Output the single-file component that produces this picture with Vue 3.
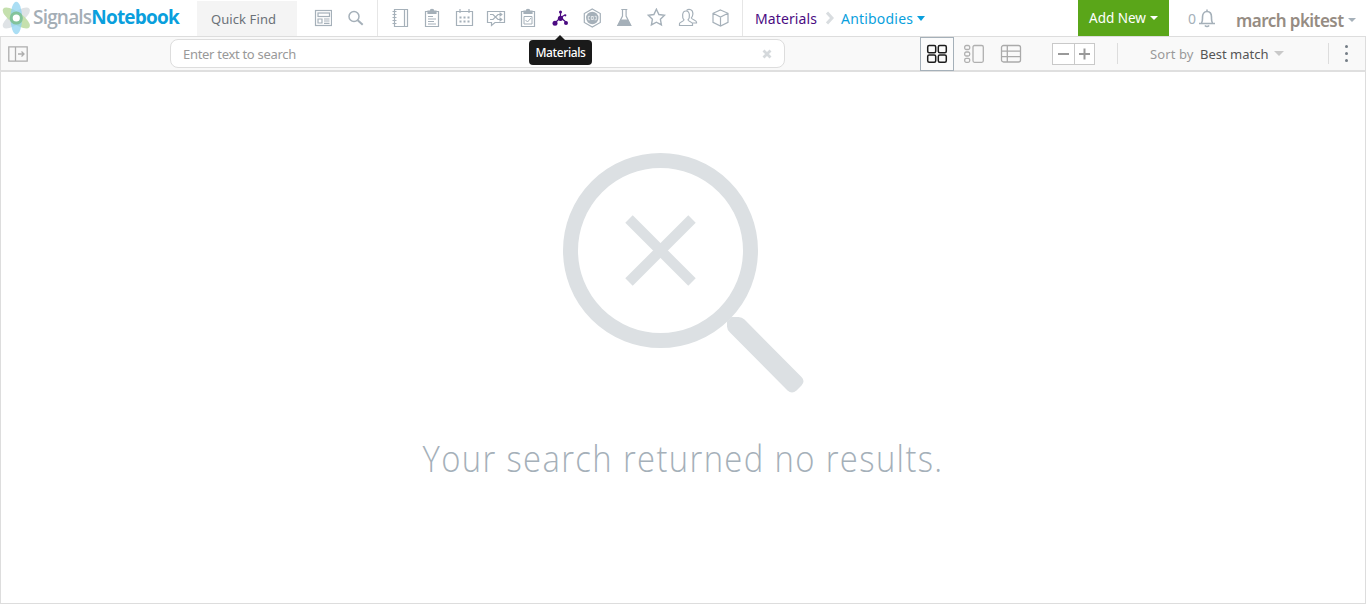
<script setup>
const navIcons = [
  'notebook', 'clipboard', 'calendar', 'shuffle', 'task', 'materials',
  'hexagon', 'flask', 'star', 'people', 'cube',
]
</script>

<template>
  <div class="app">
    <header class="header">
      <div class="brand">
        <svg class="logo" width="32" height="36" viewBox="0 0 32 36">
          <ellipse cx="16.3" cy="18" rx="16" ry="6" transform="rotate(-35 16.3 18)" fill="#dfe3e6" />
          <ellipse cx="16.3" cy="18" rx="16" ry="6" transform="rotate(35 16.3 18)" fill="#c5e0ae" />
          <ellipse cx="16.3" cy="18" rx="5.8" ry="16.2" fill="#8fd3f0" fill-opacity=".75" />
          <circle cx="16.3" cy="18" r="6.6" fill="#82c39b" />
          <circle cx="16.3" cy="18" r="3.6" fill="#fff" />
        </svg>
        <span class="word"><span class="signals">Signals</span><span class="book">Notebook</span></span>
      </div>
      <button class="quick"><span>Quick Find</span></button>
      <div class="tools">
        <svg width="18" height="18" viewBox="0 0 18 18" class="ic">
          <rect x="1.500" y="1.500" width="16" height="15" />
          <rect x="4" y="4" width="11.500" height="3.500" />
          <path d="M4 10h4v4H4zM10 10h5.500M10 12h5.500M10 14.300h5.500" />
        </svg>
        <svg width="18" height="18" viewBox="0 0 18 18" class="ic">
          <circle cx="8" cy="7.500" r="5" stroke-width="1.500" /><path d="M11.700 11.200l5 4.500" stroke-width="2" />
        </svg>
      </div>
      <nav class="nav">
        <a v-for="name in navIcons" :key="name" class="item">
          <svg width="20" height="20" viewBox="0 0 20 20" class="ic">
            <g v-if="name === 'notebook'">
              <path d="M4.500 1.500h13v17h-13zM14.500 1.500v17" />
              <path d="M2.500 3.500h4M2.500 6.500h4M2.500 9.500h4M2.500 12.500h4M2.500 15.500h4" />
            </g>
            <g v-else-if="name === 'clipboard'">
              <path d="M6 3.500H3.500v15h13v-15H14" />
              <path d="M6 5.500v-2.500h2.200c.2-2.300 3.400-2.300 3.600 0H14v2.500z" fill="#a5b0b9" />
              <path d="M6 8.500h5M6 11h8M6 13.500h6M6 16h8" />
            </g>
            <g v-else-if="name === 'calendar'">
              <path d="M2.500 3.500h16v14h-16zM6 1v4M15 1v4" />
              <path d="M5.500 9.500h10M5.500 13.500h10" stroke-width="2" stroke-dasharray="2 2" />
            </g>
            <g v-else-if="name === 'shuffle'">
              <path d="M1.500 3.500h17v11H9l-3.500 3v-3h-4z" />
              <path d="M4 6.500h3l5 5h3.500M4 11.500h3l5-5h3.500M13.500 4.700l2.300 1.800-2.300 1.800M13.500 9.700l2.300 1.800-2.300 1.800" stroke-width="1.200" />
            </g>
            <g v-else-if="name === 'task'">
              <path d="M6 3.500H3.500v15h13v-15H14" />
              <path d="M6 5.500v-2.500h2.200c.2-2.300 3.400-2.300 3.600 0H14v2.500z" fill="#a5b0b9" />
              <path d="M6 8.500h8v7.500H6zM7.500 12l2 2 3.500-4" stroke-width="1" />
            </g>
            <g v-else-if="name === 'materials'" class="purple">
              <path d="M10.500 9.500L5 15M10.500 9.500V4M10.500 9.500l6 5M10.500 9.500L15 7" stroke-width="1.200" />
              <circle cx="5" cy="15.200" r="2.500" /><circle cx="10.500" cy="10.300" r="2.600" />
              <circle cx="10.500" cy="4" r="1.500" /><circle cx="16" cy="15" r="2" /><circle cx="15.300" cy="7.300" r="1.100" />
            </g>
            <g v-else-if="name === 'hexagon'">
              <path d="M10.300 1l8 4.500v9l-8 4.500-8-4.500v-9z" />
              <circle cx="10.300" cy="10" r="6.200" fill="#a5b0b9" stroke="none" />
              <path d="M8 8.300H6.300v3.500H8M9.300 8.500h2v3h-2zM12.600 8.300h1.700v3.500h-1.700" stroke="#fff" stroke-width=".7" />
            </g>
            <g v-else-if="name === 'flask'">
              <path d="M7.300 1.500h6M8.500 2v6L3.800 17.500h13L12.100 8V2" />
              <path d="M6.700 11.500h7.200l3.400 6.500h-14z" fill="#a5b0b9" stroke="none" />
            </g>
            <path v-else-if="name === 'star'" d="M10.400 1.200l2.500 5.300 5.600.8-4.100 4 1 5.600-5-2.700-5 2.700 1-5.600-4.100-4 5.600-.8z" stroke-width="1.400" />
            <g v-else-if="name === 'people'">
              <path d="M1.500 17.500v-2c0-1.500 4.200-2 4.500-3.500-2-2-2.300-9 2-9s4 7 2 9c.3 1.500 4.500 2 4.500 3.500v2z" />
              <path d="M8.500 2.500c2.500-2.200 7-1 6.300 4-.2 1.600-.8 2.600-1.500 3.500.3 1.600 5.200 2 5.200 4v1h-4" />
            </g>
            <path v-else d="M10.500 2l7.500 3.300v9L10.500 18 3 14.300v-9zM3 5.300L10.500 9 18 5.300M10.500 9v9" />
          </svg>
          <span v-if="name === 'materials'" class="tip">Materials</span>
        </a>
      </nav>
      <div class="crumbs">
        <a class="root">Materials</a>
        <svg class="sep" width="8" height="14" viewBox="0 0 8 14"><path d="M1 1.500L6 7l-5 5.500" fill="none" stroke="#d9dde0" stroke-width="3" /></svg>
        <a class="leaf">Antibodies</a><i class="caret blue"></i>
      </div>
      <button class="add"><span>Add New</span><i class="caret white"></i></button>
      <div class="bell">
        <span>0</span>
        <svg width="18" height="20" viewBox="0 0 18 20" fill="none" stroke="#a5b0b9" stroke-width="1.600">
          <path d="M1 15.500h16M3.500 15c1.200-1.500 1-3.500 1-6 0-3 1.600-5.500 4.500-5.500s4.500 2.500 4.500 5.500c0 2.500-.2 4.500 1 6M9 3.500v-2M6.800 17.500q2.200 2 4.400 0" />
        </svg>
      </div>
      <div class="user"><span>march pkitest</span><i class="caret gray"></i></div>
    </header>

    <div class="bar">
      <svg class="panel" width="20" height="16" viewBox="0 0 20 16" fill="none" stroke="#adadad" stroke-width="1.300">
        <path d="M.8.800h18.400v14.400H.8zM7.500 1v14M10 8h6M13.500 5.500L16 8l-2.500 2.500" />
      </svg>
      <div class="search">
        <span>Enter text to search</span>
        <svg width="10" height="10" viewBox="0 0 10 10"><path d="M1.500 1.500l7 7M8.500 1.500l-7 7" stroke="#d5d9dc" stroke-width="2.800" /></svg>
      </div>
      <div class="views">
        <button class="view active">
          <svg width="22" height="20" viewBox="0 0 22 20" fill="none" stroke="#1c1c1c" stroke-width="1.500">
            <rect x="1.700" y="1.500" width="8" height="7.300" rx="1.500" /><rect x="12.300" y="1.500" width="8" height="7.300" rx="1.500" />
            <rect x="1.700" y="11" width="8" height="7.300" rx="1.500" /><rect x="12.300" y="11" width="8" height="7.300" rx="1.500" />
          </svg>
        </button>
        <button class="view">
          <svg width="22" height="20" viewBox="0 0 22 20" fill="none" stroke="#b0b0b0" stroke-width="1.300">
            <rect x="1.700" y="1.500" width="5" height="4" rx="1.500" /><rect x="1.700" y="8" width="5" height="4" rx="1.500" />
            <rect x="1.700" y="14.300" width="5" height="4" rx="1.500" /><rect x="10" y="1.500" width="10.300" height="16.800" rx="1.500" />
          </svg>
        </button>
        <button class="view">
          <svg width="22" height="20" viewBox="0 0 22 20" fill="none" stroke="#aaa" stroke-width="1.300">
            <rect x="1.500" y="1.500" width="19" height="16.500" rx="2" /><path d="M1.500 7.200h19M1.500 12.700h19M7.300 1.500V18" />
          </svg>
        </button>
      </div>
      <div class="zoom">
        <button><svg width="12" height="12"><path d="M0 6h11" stroke="#999" stroke-width="2" /></svg></button>
        <button><svg width="12" height="12"><path d="M0 6h11M5.500 .5v11" stroke="#999" stroke-width="2" /></svg></button>
      </div>
      <div class="sort"><span class="by">Sort by</span><span class="match">Best match</span><i class="caret light"></i></div>
      <div class="more"><i></i><i></i><i></i></div>
    </div>

    <main class="empty">
      <svg class="lens" width="242" height="242" viewBox="-0.500 -0.500 242 242">
        <circle cx="98" cy="98" r="90" fill="none" stroke="#dce0e3" stroke-width="15" />
        <path d="M66.500 66.500l63 63M129.500 66.500l-63 63" stroke="#dce0e3" stroke-width="10.500" />
        <path d="M164.500 169L169 164.500h7q3.500 0 6 2.500l57 57.500q4 4 0 8.500l-5 5q-4.500 4-9 0l-57.500-58q-3-3-3-6z" fill="#dce0e3" />
      </svg>
      <p class="message">Your search returned no results.</p>
    </main>
  </div>
</template>

<style>
body { overflow: hidden; background: #fff; }
</style>

<style scoped>
.app { width: 1366px; height: 604px; display: flex; flex-direction: column; font-family: "Noto Sans", "Open Sans", sans-serif; background: #fff; }
.app * { box-sizing: border-box; }
button { border: 0; padding: 0; margin: 0; background: none; font: inherit; color: inherit; display: flex; align-items: center; justify-content: center; }
span, a { white-space: nowrap; }
.header { height: 36px; display: flex; flex: none; }
.brand { width: 197px; display: flex; align-items: center; }
.logo { flex: none; }
.word { font: 600 19px/34px "Open Sans", sans-serif; letter-spacing: -.8px; height: 36px; margin-left: 1px; }
.signals { color: #a4aeb6; }
.book { color: #0a9fdd; font-weight: 700; }
.quick { width: 100px; height: 35px; margin-top: 1px; background: #f4f4f4; color: #6b7178; font-size: 13px; padding-right: 7px; letter-spacing: .1px; }
.tools { width: 81px; padding-left: 17px; display: flex; align-items: center; gap: 14px; border-right: 1px solid #e6e6e6; }
.ic { fill: none; stroke: #a5b0b9; stroke-width: 1.2; flex: none; }
.nav { width: 365px; padding-left: 6px; display: flex; border-right: 1px solid #e6e6e6; }
.item { width: 32px; display: flex; align-items: center; justify-content: center; position: relative; }
.purple { fill: #4b0b82; stroke: #4b0b82; }
.purple circle { stroke: none; }
.tip { position: absolute; z-index: 2; left: -15px; top: 40px; width: 63px; height: 25px; border-radius: 4px; background: #1a1a1a; color: #fff; font: 500 12px/25px "Noto Sans", sans-serif; letter-spacing: -.4px; text-align: center; }
.tip::before { content: ""; position: absolute; left: 26px; top: -5px; border: 5px solid transparent; border-top: 0; border-bottom-color: #1a1a1a; }
.crumbs { width: 335px; padding-left: 12px; display: flex; align-items: center; font-size: 14px; }
.root { color: #4b0b82; width: 71px; letter-spacing: .1px; }
.sep { width: 8px; margin-right: 7px; }
.leaf { color: #0a9fdd; width: 74px; letter-spacing: .2px; }
.caret { flex: none; border: 4px solid transparent; border-top-color: currentColor; border-bottom: 0; }
.crumbs .caret { border-width: 5px 4.500px 0; }
.blue { color: #0a9fdd; margin-left: 2px; }
.add { width: 91px; background: #5aa619; color: #fff; font-size: 13.500px; gap: 4px; }
.bell { width: 67px; padding-left: 19px; display: flex; align-items: center; gap: 2px; color: #a5b0b9; font-size: 14px; }
.user { width: 130px; display: flex; align-items: center; gap: 4px; color: #968c83; font-size: 17px; font-weight: 600; padding-top: 4px; }
.user span { letter-spacing: -.55px; }
.gray { color: #a5b0b9; }
.bar { height: 36px; flex: none; display: flex; align-items: center; background: #f9f9f9; border: 1px solid #ddd; border-bottom: 2px solid #dfdfdf; }
.panel { margin-left: 7px; margin-right: 142px; flex: none; }
.search { width: 615px; height: 29px; flex: none; border: 1px solid #ddd; border-radius: 8px; background: #fff; padding: 0 12px; display: flex; align-items: center; justify-content: space-between; color: #999; font: 13px "Noto Sans", sans-serif; letter-spacing: -.3px; }
.views { display: flex; margin-left: 135px; gap: 3px; flex: none; }
.view { width: 34px; height: 34px; border: 1px solid transparent; }
.active { border-color: #a5b0b9; background: #fbfbfb; }
.zoom { width: 43px; height: 22px; margin-left: 24px; display: flex; border: 1px solid #c9c9c9; background: #fff; flex: none; }
.zoom button { width: 21px; }
.zoom button + button { width: 20px; border-left: 1px solid #c9c9c9; }
.sort { height: 21px; margin-left: 22px; width: 212px; padding-left: 32px; display: flex; align-items: center; font-size: 13px; border-left: 1px solid #ddd; border-right: 1px solid #ddd; flex: none; }
.by { color: #999; width: 50px; letter-spacing: .1px; }
.match { color: #555; width: 69px; }
.light { color: #c9c9c9; margin-left: 5px; }
.sort .caret { border-width: 5px 5px 0; }
.more { width: 34px; display: flex; flex-direction: column; align-items: center; gap: 4px; }
.more i { width: 3px; height: 3px; border-radius: 50%; background: #747d86; }
.empty { flex: 1; border: 1px solid #ddd; border-top: 0; display: flex; flex-direction: column; align-items: center; }
.lens { margin-top: 80px; flex: none; }
.message { margin: 38px 0 0; font: 300 36px/54px "Open Sans", sans-serif; letter-spacing: 1.500px; color: #a5b0b9; white-space: nowrap; transform: scaleX(.911); }
</style>
